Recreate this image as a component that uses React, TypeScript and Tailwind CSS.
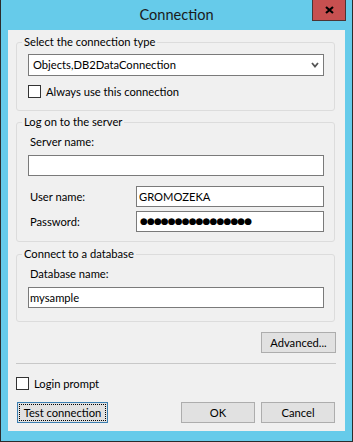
import React from 'react';

function Group({ title, className, children }: { title: string; className?: string; children: React.ReactNode }) {
  return (
    <fieldset className={`w-[319px] border border-[#dcdcdc] rounded-[3px] pl-[11px] pr-[10px] ${className ?? ''}`}>
      <legend className="-ml-[6px] px-[2px] leading-[16px]">{title}</legend>
      {children}
    </fieldset>
  );
}

function CheckBox({ label }: { label: string }) {
  return (
    <label className="flex items-center h-[13px] gap-[5px]">
      <span className="w-[13px] h-[13px] border border-[#333333] bg-white" />
      <span className="leading-[16px]">{label}</span>
    </label>
  );
}

function Button({ children, className }: { children: React.ReactNode; className?: string }) {
  return (
    <button className={`h-[21px] bg-[#e1e1e1] border border-[#adadad] leading-[16px] ${className ?? ''}`}>
      {children}
    </button>
  );
}

export default function App() {
  return (
    <div className="w-[353px] h-[442px] bg-[#66cbea] border-x border-b border-[#2b2b2b] font-['Lato',sans-serif] text-[11.2px] text-black flex flex-col">
      <div className="relative h-[30px] flex items-center justify-center">
        <span className="text-[14.6px] leading-[20px] text-[#1a1a1a]">Connection</span>
        <button className="absolute top-0 right-[6px] w-[34px] h-[21px] bg-[#c75050] border-x border-b border-[#4d3434] flex items-center justify-center">
          <svg width="9" height="8" viewBox="0 0 9 8">
            <path d="M1 1L8 7M8 1L1 7" stroke="#000" strokeWidth="2.2" />
          </svg>
        </button>
      </div>

      <div className="mx-[7px] h-[401px] bg-[#f0f0f0] pl-[8px] pt-[4px]">
        <div className="w-[320px] flex flex-col">
          <Group title="Select the connection type" className="pt-[4px] pb-[12px]">
            <div className="h-[22px] bg-white border border-[#7a7a7a] flex items-center justify-between pl-[4px] pr-[4px]">
              <span className="leading-[16px]">Objects,DB2DataConnection</span>
              <svg width="8" height="6" viewBox="0 0 8 6">
                <path d="M1 1L4 4.5L7 1" stroke="#555" strokeWidth="1.8" fill="none" />
              </svg>
            </div>
            <div className="mt-[9px]">
              <CheckBox label="Always use this connection" />
            </div>
          </Group>

          <Group title="Log on to the server" className="mt-[3px] pt-[4px] pb-[9px]">
            <div className="pl-[2px] leading-[16px]">Server name:</div>
            <input readOnly className="mt-[5px] block w-full h-[21px] bg-white border border-[#7a7a7a] px-[2px] outline-none" />
            <div className="mt-[10px] flex items-center">
              <span className="w-[108px] pl-[2px] leading-[16px]">User name:</span>
              <input readOnly defaultValue="GROMOZEKA" className="w-[188px] h-[21px] bg-white border border-[#7a7a7a] px-[2px] outline-none" />
            </div>
            <div className="mt-[4px] flex items-center">
              <span className="w-[108px] pl-[2px] leading-[16px]">Password:</span>
              <div className="w-[188px] h-[21px] bg-white border border-[#7a7a7a] pl-[3px] flex items-center font-['DejaVu_Sans',sans-serif] text-[9px] tracking-[-0.9px]">
                ●●●●●●●●●●●●●●●●
              </div>
            </div>
          </Group>

          <Group title="Connect to a database" className="mt-[4px] pt-[4px] pb-[13px]">
            <div className="pl-[2px] leading-[16px]">Database name:</div>
            <input readOnly defaultValue="mysample" className="mt-[5px] block w-full h-[21px] bg-white border border-[#7a7a7a] px-[1px] outline-none" />
          </Group>

          <Button className="self-end mt-[10px] w-[75px]">Advanced...</Button>

          <div className="mt-[10px] h-px w-full bg-[#c8c8c8]" />

          <div className="mt-[13px]">
            <CheckBox label="Login prompt" />
          </div>

          <div className="mt-[12px] flex items-center">
            <button className="relative ml-[1px] w-[91px] h-[21px] bg-[#e1e1e1] border border-[#3c7fb1] leading-[16px]">
              <span className="absolute inset-[1px] border border-dotted border-black" />
              Test connection
            </button>
            <Button className="ml-auto w-[74px]">OK</Button>
            <Button className="ml-[6px] mr-[1px] w-[74px]">Cancel</Button>
          </div>
        </div>
      </div>
    </div>
  );
}
